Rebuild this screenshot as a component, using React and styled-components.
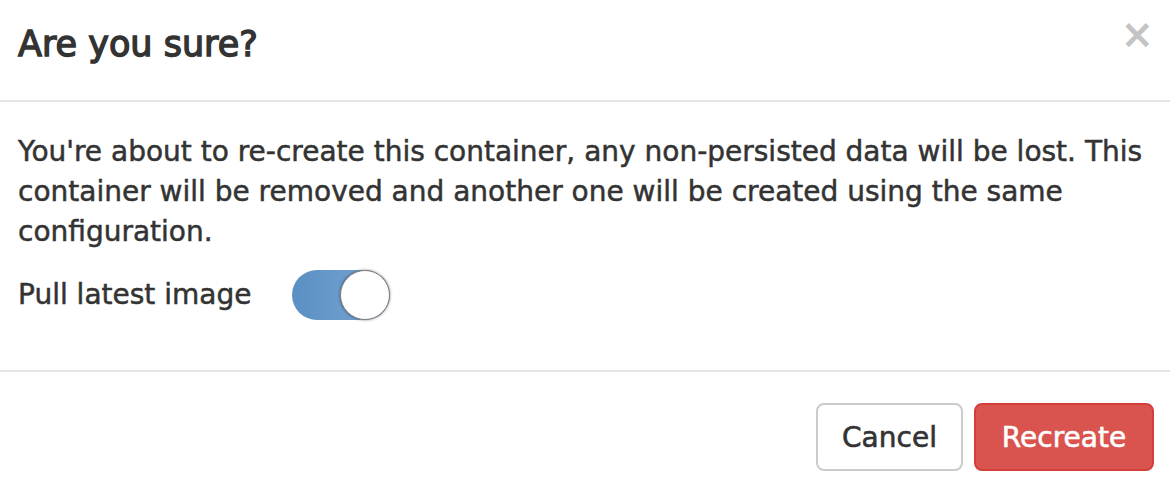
import React, { useState } from "react";
import styled, { createGlobalStyle } from "styled-components";

const Global = createGlobalStyle`
  html, body { margin: 0; padding: 0; background: #fff; }
  body { font-family: "DejaVu Sans", "Liberation Sans", sans-serif; color: #333; }
  * { box-sizing: border-box; }
`;

const Modal = styled.div`
  width: 1170px;
  height: 486px;
  background: #fff;
  overflow: hidden;
`;

const Header = styled.div`
  display: flex;
  align-items: flex-start;
  justify-content: space-between;
  padding: 24px 18px 30px 18px;
  border-bottom: 2px solid #e5e5e5;
  height: 102px;
`;

const Title = styled.h4`
  margin: 0;
  font-size: 35px;
  line-height: 40px;
  font-weight: 400;
  -webkit-text-stroke: 1.4px #333;
  color: #333;
`;

const Close = styled.button`
  border: 0;
  background: none;
  padding: 0;
  margin: -10px -2px 0 0;
  font-family: "DejaVu Sans", sans-serif;
  font-size: 40px;
  line-height: 40px;
  font-weight: 700;
  color: #c4c4c4;
  cursor: pointer;
`;

const Body = styled.div`
  padding: 30px 18px 30px 18px;
  height: 270px;
  border-bottom: 2px solid #e5e5e5;
`;

const Text = styled.p`
  margin: 0;
  font-size: 28px;
  line-height: 40px;
  font-weight: 400;
  -webkit-text-stroke: 0.5px #333;
  color: #333;
`;

const Row = styled.div`
  display: flex;
  align-items: center;
  margin-top: 18px;
`;

const Label = styled.label`
  width: 274px;
  font-size: 28px;
  line-height: 40px;
  font-weight: 400;
  -webkit-text-stroke: 0.5px #333;
`;

const Switch = styled.div`
  position: relative;
  width: 98px;
  height: 50px;
  border-radius: 25px;
  background: ${(p) => (p.$on ? "linear-gradient(90deg, #5a8fc3 0%, #79a7d3 100%)" : "#ddd")};
  cursor: pointer;
`;

const Knob = styled.span`
  position: absolute;
  top: 0;
  left: ${(p) => (p.$on ? "48px" : "0")};
  width: 50px;
  height: 50px;
  border-radius: 50%;
  background: #fff;
  border: 1.5px solid #7f7f7f;
  box-shadow: 0 0 3px rgba(0, 0, 0, 0.45);
`;

const Footer = styled.div`
  display: flex;
  justify-content: flex-end;
  gap: 11px;
  padding: 31px 16px 0 18px;
`;

const Button = styled.button`
  height: 68px;
  width: ${(p) => p.$w}px;
  border-radius: 8px;
  font-family: "DejaVu Sans", sans-serif;
  font-size: 28px;
  font-weight: 400;
  -webkit-text-stroke: 0.6px ${(p) => (p.$danger ? "#fff" : "#333")};
  border: 2px solid ${(p) => (p.$danger ? "#d43f3a" : "#ccc")};
  background: ${(p) => (p.$danger ? "#d9534f" : "#fff")};
  color: ${(p) => (p.$danger ? "#fff" : "#333")};
  cursor: pointer;
`;

export default function App() {
  const [on, setOn] = useState(true);
  return (
    <Modal>
      <Global />
      <Header>
        <Title>Are you sure?</Title>
        <Close aria-label="Close">×</Close>
      </Header>
      <Body>
        <Text>
          You're about to re-create this container, any non-persisted data will be lost. This
          container will be removed and another one will be created using the same
          configuration.
        </Text>
        <Row>
          <Label>Pull latest image</Label>
          <Switch $on={on} onClick={() => setOn(!on)}>
            <Knob $on={on} />
          </Switch>
        </Row>
      </Body>
      <Footer>
        <Button $w={147}>Cancel</Button>
        <Button $w={180} $danger>Recreate</Button>
      </Footer>
    </Modal>
  );
}
